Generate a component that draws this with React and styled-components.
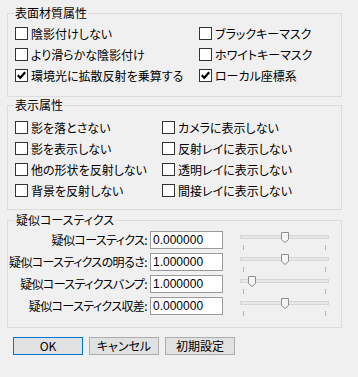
import React from "react";
import styled, { createGlobalStyle } from "styled-components";

const Global = createGlobalStyle`
  html, body { margin: 0; padding: 0; background: #f0f0f0; }
  body {
    font-family: "Noto Sans CJK JP", "Noto Sans", sans-serif;
    font-size: 12px;
    color: #000;
    font-feature-settings: "palt";
  }
`;

const Page = styled.div`
  width: 358px;
  height: 377px;
  box-sizing: border-box;
  padding: 13px 0 0 7px;
  display: flex;
  flex-direction: column;
`;

const Group = styled.div`
  position: relative;
  width: 335px;
  box-sizing: border-box;
  border: 1px solid #dcdcdc;
  margin-top: ${(p) => p.$mt || 0}px;
  padding: ${(p) => p.$pad};
`;

const Title = styled.span`
  position: absolute;
  top: -8px;
  left: ${(p) => p.$left || 5}px;
  padding: 0 1px;
  background: #f0f0f0;
  line-height: 14px;
  white-space: nowrap;
`;

const CheckGrid = styled.div`
  display: grid;
  grid-template-columns: ${(p) => p.$cols};
  row-gap: 8px;
`;

const CheckRow = styled.label`
  display: flex;
  align-items: center;
  gap: 3px;
  height: 13px;
  line-height: 13px;
  white-space: nowrap;
`;

const Box = styled.span`
  width: 13px;
  height: 13px;
  box-sizing: border-box;
  border: 1px solid #333;
  background: #fff;
  display: flex;
  align-items: center;
  justify-content: center;
  flex: none;
`;

const Check = ({ label, checked }) => (
  <CheckRow>
    <Box>
      {checked && (
        <svg width="11" height="11" viewBox="0 0 11 11">
          <polyline
            points="1.8,5.2 4.2,7.8 9.2,2.2"
            fill="none"
            stroke="#000"
            strokeWidth="2.2"
          />
        </svg>
      )}
    </Box>
    <span>{label}</span>
  </CheckRow>
);

const FieldGrid = styled.div`
  display: grid;
  grid-template-columns: 139px 73px 89px;
  column-gap: 3px;
  row-gap: 4px;
  & > :nth-child(3n) { margin-left: 14px; }
`;

const FieldLabel = styled.span`
  height: 18px;
  line-height: 18px;
  display: flex;
  justify-content: flex-end;
  white-space: nowrap;
  letter-spacing: -0.6px;
`;

const Input = styled.div`
  width: 73px;
  height: 18px;
  box-sizing: border-box;
  border: 1px solid #9a9a9a;
  background: #fff;
  padding-left: 2px;
  line-height: 16px;
  font-family: "Liberation Sans", "Noto Sans", sans-serif;
  font-size: 12px;
`;

const Slider = styled.div`
  position: relative;
  width: 89px;
  height: 18px;
`;

const Track = styled.div`
  position: absolute;
  left: 0;
  right: 0;
  top: 4px;
  height: 4px;
  box-sizing: border-box;
  border: 1px solid #d6d6d6;
  background: #e7e7e7;
`;

const Thumb = styled.svg`
  position: absolute;
  top: 1px;
`;

const Tick = styled.div`
  position: absolute;
  top: 14px;
  width: 1px;
  height: 5px;
  background: #b4b4b4;
`;

const SliderCtl = ({ pos }) => (
  <Slider>
    <Track />
    <Thumb width="8" height="11" viewBox="0 0 8 11" style={{ left: pos }}>
      <polygon
        points="0.5,0.5 7.5,0.5 7.5,7.5 4,10.5 0.5,7.5"
        fill="#f4f4f4"
        stroke="#8e8e8e"
      />
    </Thumb>
    <Tick style={{ left: 3 }} />
    <Tick style={{ left: 85 }} />
  </Slider>
);

const ButtonRow = styled.div`
  display: flex;
  gap: 6px;
  margin-top: 9px;
  padding-left: 6px;
`;

const Button = styled.div`
  width: 70px;
  height: 18px;
  box-sizing: border-box;
  border: 1px solid ${(p) => (p.$primary ? "#0078d7" : "#adadad")};
  background: #e1e1e1;
  display: flex;
  align-items: center;
  justify-content: center;
  line-height: 16px;
  white-space: nowrap;
`;

const fields = [
  ["疑似コースティクス:", "0.000000", 41],
  ["疑似コースティクスの明るさ:", "1.000000", 41],
  ["疑似コースティクスバンプ:", "1.000000", 8],
  ["疑似コースティクス収差:", "0.000000", 41],
];

export default function App() {
  return (
    <>
      <Global />
      <Page>
        <Group $pad="13px 0 14px 7px">
          <Title $left={6}>表面材質属性</Title>
          <CheckGrid $cols="184px 1fr">
            <Check label="陰影付けしない" />
            <Check label="ブラックキーマスク" />
            <Check label="より滑らかな陰影付け" />
            <Check label="ホワイトキーマスク" />
            <Check label="環境光に拡散反射を乗算する" checked />
            <Check label="ローカル座標系" checked />
          </CheckGrid>
        </Group>
        <Group $mt={8} $pad="15px 0 12px 7px">
          <Title $left={6}>表示属性</Title>
          <CheckGrid $cols="147px 1fr">
            <Check label="影を落とさない" />
            <Check label="カメラに表示しない" />
            <Check label="影を表示しない" />
            <Check label="反射レイに表示しない" />
            <Check label="他の形状を反射しない" />
            <Check label="透明レイに表示しない" />
            <Check label="背景を反射しない" />
            <Check label="間接レイに表示しない" />
          </CheckGrid>
        </Group>
        <Group $mt={10} $pad="10px 0 12px 0">
          <Title $left={7}>疑似コースティクス</Title>
          <FieldGrid>
            {fields.map(([l, v, p]) => (
              <React.Fragment key={l}>
                <FieldLabel>{l}</FieldLabel>
                <Input>{v}</Input>
                <SliderCtl pos={p} />
              </React.Fragment>
            ))}
          </FieldGrid>
        </Group>
        <ButtonRow>
          <Button $primary>OK</Button>
          <Button>キャンセル</Button>
          <Button>初期設定</Button>
        </ButtonRow>
      </Page>
    </>
  );
}
